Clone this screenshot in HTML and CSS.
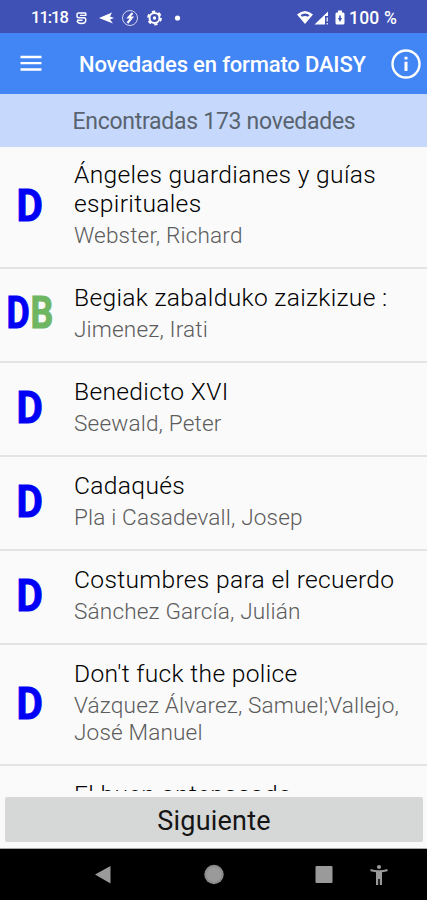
FILE: index.html
```html
<!DOCTYPE html>
<html lang="es">
<head>
    <meta charset="UTF-8">
    <meta name="viewport" content="width=device-width, initial-scale=1.0">
    <title>Novedades en formato DAISY</title>
    <link rel="stylesheet" href="styles.css">
</head>
<body>

<div class="screen">
    <!-- Status bar -->
    <div class="status-bar">
        <span class="clock">11:18</span>
        <svg class="status-left" width="108" height="18" viewBox="0 0 108 18" fill="none" stroke="#fff">
            <path d="M13 4H5.500Q4 4 4 6V7Q4 8.800 6 8.800H11Q12.800 8.800 12.800 11Q12.800 14.500 8.500 14.500Q5 14.500 4 12M12.800 4V7M7 6.400H12.800M4 11.200H9.500" stroke-width="1.400"/>
            <path d="M26 9L39 3.500L37 7.500L41 9L37 10.500L40 14.500Z" fill="#fff" stroke="none"/>
            <circle cx="57" cy="9" r="7.500" stroke-width="1" opacity=".75"/>
            <path d="M59.500 4L55.500 8.500H59L54.500 14" stroke-width="2"/>
            <circle cx="81.500" cy="9" r="5" stroke-width="2"/>
            <circle cx="81.500" cy="9" r="6.500" stroke-width="1.800" stroke-dasharray="3.400 3.400"/>
            <circle cx="81.500" cy="9" r="1.700" fill="#fff" stroke="none"/>
            <circle cx="104.500" cy="9" r="2.600" fill="#fff" stroke="none"/>
        </svg>
        <svg class="status-right" width="50" height="18" viewBox="0 0 50 18" fill="#fff">
            <path d="M1 5.500Q9 -1.500 17 5.500L9 15Z"/>
            <path d="M4.500 6Q9 2.800 13.500 6L12 7.800Q9 6 6 7.800Z" fill="#3f51b5"/>
            <path d="M18.500 15.500L32 2.500V7H29V15.500Z"/>
            <path d="M30.500 8.500H32V12.500H30.500ZM30.500 14H32V15.500H30.500Z" opacity=".8"/>
            <path d="M40.500 3.500H42V1.500H46V3.500H47Q48.500 3.500 48.500 5V14Q48.500 15.500 47 15.500H41Q39.500 15.500 39.500 14V5Q39.500 3.500 40.500 3.500Z"/>
            <path d="M43.200 6.500H44.800V9H46L44 13L42 9H43.200Z" fill="#3f51b5"/>
        </svg>
        <span class="battery">100 %</span>
    </div>

    <!-- App bar -->
    <header class="app-bar">
        <svg class="menu-icon" width="22" height="18" viewBox="0 0 22 18" stroke="#fff" stroke-width="2.300">
            <path d="M.5 2H21.500M.5 8.200H21.500M.5 14.500H21.500"/>
        </svg>
        <h1>Novedades en formato DAISY</h1>
        <svg class="info-icon" width="30" height="30" viewBox="0 0 30 30">
            <circle cx="15" cy="15" r="13.500" fill="none" stroke="#fff" stroke-width="2.400"/>
            <path d="M13.500 7.800H16.500V10.600H13.500ZM13.500 12.800H16.500V22H13.500Z" fill="#fff"/>
        </svg>
    </header>
    <div class="result-count">Encontradas 173 novedades</div>

    <!-- Book list -->
    <ul class="book-list">
        <li class="book">
            <div class="format"><span class="daisy">D</span></div>
            <div class="info">
                <div class="title">Ángeles guardianes y guías espirituales</div>
                <div class="author">Webster, Richard</div>
            </div>
        </li>
        <li class="book">
            <div class="format both"><span class="daisy">D</span><span class="braille">B</span></div>
            <div class="info">
                <div class="title">Begiak zabalduko zaizkizue :</div>
                <div class="author">Jimenez, Irati</div>
            </div>
        </li>
        <li class="book">
            <div class="format"><span class="daisy">D</span></div>
            <div class="info">
                <div class="title">Benedicto XVI</div>
                <div class="author">Seewald, Peter</div>
            </div>
        </li>
        <li class="book">
            <div class="format"><span class="daisy">D</span></div>
            <div class="info">
                <div class="title">Cadaqués</div>
                <div class="author">Pla i Casadevall, Josep</div>
            </div>
        </li>
        <li class="book">
            <div class="format"><span class="daisy">D</span></div>
            <div class="info">
                <div class="title">Costumbres para el recuerdo</div>
                <div class="author">Sánchez García, Julián</div>
            </div>
        </li>
        <li class="book">
            <div class="format"><span class="daisy">D</span></div>
            <div class="info">
                <div class="title">Don't fuck the police</div>
                <div class="author">Vázquez Álvarez, Samuel;Vallejo, José Manuel</div>
            </div>
        </li>
        <li class="book">
            <div class="format"></div>
            <div class="info">
                <div class="title">El buen antepasado</div>
            </div>
        </li>
    </ul>

    <div class="footer">
        <button class="next-button">Siguiente</button>
    </div>

    <!-- System navigation -->
    <nav class="nav-bar">
        <svg width="427" height="51" viewBox="0 0 427 51" fill="#9a9a9a">
            <path d="M95 25.500L110.500 17V34.500Z"/>
            <circle cx="214" cy="25.500" r="9.700" fill="#8c8c8c"/>
            <circle cx="214" cy="25.500" r="7.500"/>
            <rect x="315.500" y="17" width="17" height="17" rx="1"/>
            <circle cx="379" cy="18" r="2.100"/>
            <path d="M370.500 20Q379 22.500 387.500 20V22.200L382 23.200V36H379.800V30H378.200V36H376V23.200L370.500 22.200Z"/>
        </svg>
    </nav>
</div>

</body>
</html>
```
FILE: styles.css
```css
/* Global Styles */
* {
    box-sizing: border-box;
}

body {
    margin: 0;
    font-family: Roboto, "Liberation Sans", sans-serif;
    background-color: #fafafa;
}

.screen {
    width: 427px;
    height: 900px;
    display: flex;
    flex-direction: column;
    overflow: hidden;
}

/* Status bar */
.status-bar {
    height: 33px;
    flex: none;
    display: flex;
    align-items: center;
    padding: 2px 0 0 31px;
    background-color: #3f51b5;
    color: #fff;
    font-size: 16.5px;
    font-weight: 500;
}

.clock {
    width: 42px;
    letter-spacing: -1px;
}

.status-right {
    margin-left: 115px;
}

.battery {
    margin-left: 3px;
    white-space: nowrap;
    font-size: 17.5px;
    letter-spacing: 0.2px;
}

/* App bar */
.app-bar {
    height: 61px;
    flex: none;
    display: flex;
    align-items: center;
    padding-left: 20px;
    background-color: #4285f4;
    color: #fff;
}

.app-bar h1 {
    width: 312px;
    margin: 2px 0 0 37px;
    font-size: 22px;
    font-weight: 500;
    letter-spacing: -0.16px;
    white-space: nowrap;
}

.menu-icon,
.info-icon {
    flex: none;
}

.result-count {
    height: 53px;
    flex: none;
    padding: 1px 0 0 1px;
    background-color: #c6d9fc;
    color: #59636f;
    font-size: 23px;
    letter-spacing: -0.28px;
    line-height: 54px;
    text-align: center;
}

/* Book list */
.book-list {
    height: 644px;
    flex: none;
    margin: 0;
    padding: 0;
    overflow: hidden;
    list-style: none;
}

.book {
    display: flex;
    align-items: center;
    padding: 14px 0 17.5px;
    border-bottom: 2px solid #e4e4e4;
}

.book:first-child {
    padding-top: 13px;
}

.format {
    width: 60px;
    flex: none;
    display: flex;
    justify-content: center;
    padding-top: 2px;
    font-size: 45px;
    font-weight: 700;
    line-height: 48px;
    -webkit-text-stroke: 1px;
}

.format span {
    transform: scaleX(0.9);
}

.format.both span {
    width: 24px;
    display: flex;
    justify-content: center;
    transform: scaleX(0.82);
}

.format.both {
    font-size: 43.5px;
}

.daisy {
    color: #0000f5;
}

.braille {
    color: #6fb663;
}

.info {
    flex: 1;
    padding-left: 14px;
}

.title {
    color: #000;
    font-size: 24.6px;
    font-weight: 300;
    letter-spacing: 0.33px;
    line-height: 29px;
}

.author {
    margin-top: 5px;
    color: #5c5c5c;
    font-size: 22.6px;
    font-weight: 300;
    letter-spacing: 0.15px;
    line-height: 26.5px;
}

/* Footer button */
.footer {
    height: 58px;
    flex: none;
    padding: 6px 4px 0 5px;
    border-bottom: 1px solid #aaa;
}

.next-button {
    width: 100%;
    height: 45px;
    padding: 2px 0 0;
    border: none;
    border-radius: 2px;
    background-color: #d6d8d7;
    color: #151515;
    font-family: inherit;
    font-size: 27px;
    letter-spacing: 0.2px;
    line-height: 30px;
}

.nav-bar {
    height: 51px;
    flex: none;
    background-color: #000;
}
```
